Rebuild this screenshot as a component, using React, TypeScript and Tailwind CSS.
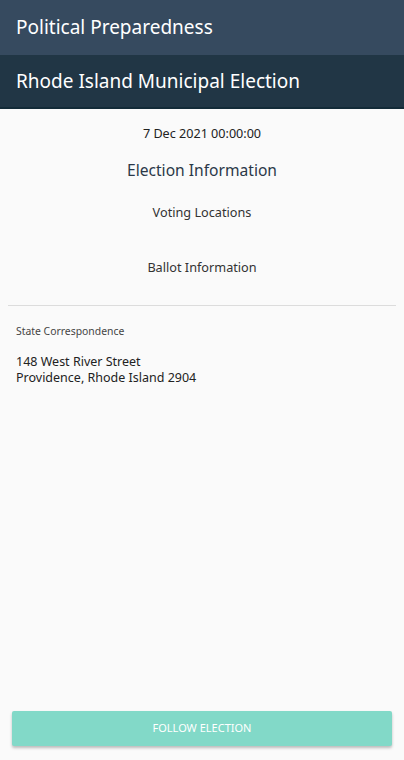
export default function App() {
  return (
    <div className="flex h-[760px] w-[404px] flex-col bg-[#fafafa] font-['Noto_Sans',sans-serif]">
      <div className="flex h-[55px] items-center bg-[#364a5f] px-4 text-[19px] text-white">
        Political Preparedness
      </div>
      <div className="flex h-[54px] items-center border-b-2 border-[#132b38] bg-[#213645] px-4 text-[19px] text-white">
        Rhode Island Municipal Election
      </div>
      <div className="flex flex-1 flex-col">
        <div className="mt-[15px] text-center text-[12.6px] leading-[20px] text-[#222]">7 Dec 2021 00:00:00</div>
        <div className="mt-[15px] text-center text-[15.6px] leading-[22px] text-[#2a3848]">Election Information</div>
        <div className="mt-[21px] text-center text-[12.7px] leading-[20px] text-[#333]">Voting Locations</div>
        <div className="mt-[35px] text-center text-[12.7px] leading-[20px] text-[#333]">Ballot Information</div>
        <div className="mx-2 mt-[28px] h-px bg-[#dcdcdc]" />
        <div className="mt-[17px] px-4 text-[10.4px] leading-[16px] text-[#444]">State Correspondence</div>
        <div className="mt-[15px] px-4 text-[12.5px] leading-[16px] text-[#222]">
          <div>148 West River Street</div>
          <div>Providence, Rhode Island 2904</div>
        </div>
        <div className="flex-1" />
        <div className="mx-3 mb-[14px] flex h-[35px] items-center justify-center rounded-[2px] bg-[#82d9c8] text-[11px] text-white shadow-[0_2px_3px_rgba(0,0,0,0.25)]">
          FOLLOW ELECTION
        </div>
      </div>
    </div>
  );
}
